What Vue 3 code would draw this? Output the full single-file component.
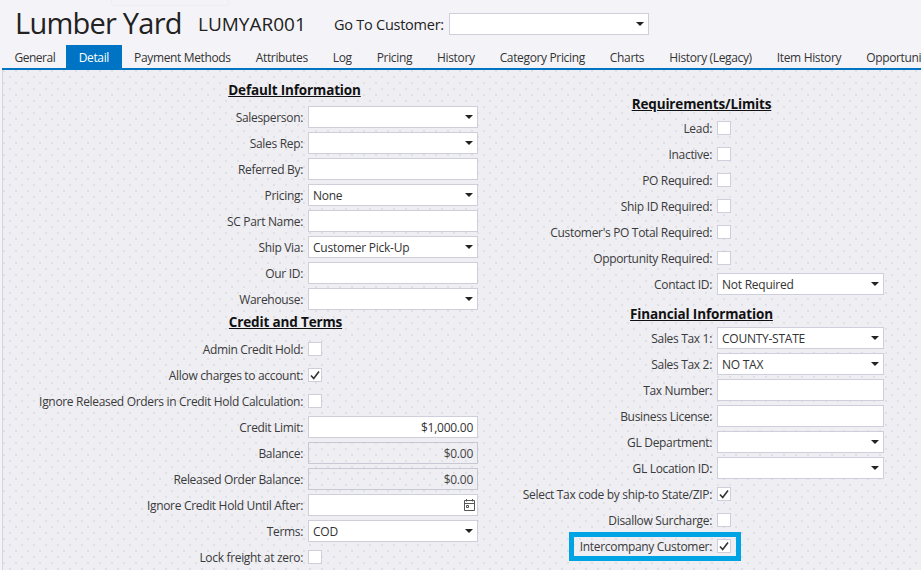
<template>
  <div class="page">
    <div class="ghost"></div>
    <header class="top">
      <h1 class="name">Lumber Yard</h1>
      <span class="code">LUMYAR001</span>
      <label class="goto">Go To Customer:</label>
      <div class="field select goto-select"><span class="caret"></span></div>
    </header>

    <nav class="tabs">
      <span v-for="t in tabs" :key="t" class="tab" :class="{ active: t === 'Detail' }">{{ t }}</span>
    </nav>

    <main class="panel">
      <section v-for="col in columns" :key="col.side" class="col" :class="col.side">
        <template v-for="group in col.groups" :key="group.title">
          <h2 class="heading">{{ group.title }}</h2>
          <div v-for="r in group.rows" :key="r.label" class="row" :class="{ marked: r.mark }">
            <span class="label">{{ r.label }}</span>

            <span v-if="r.type === 'check'" class="check">
              <svg v-if="r.checked" viewBox="0 0 14 14" width="14" height="14">
                <path d="M3 7.5l2.7 3L11 3.4" fill="none" stroke="#333" stroke-width="1.6"></path>
              </svg>
            </span>
            <div v-else-if="r.type === 'select'" class="field select">
              <span>{{ r.value }}</span>
              <span class="caret"></span>
            </div>
            <div v-else-if="r.type === 'money'" class="field money" :class="{ disabled: r.disabled }">{{ r.value }}</div>
            <div v-else-if="r.type === 'date'" class="field date">
              <svg viewBox="0 0 13 14" width="13" height="14">
                <path d="M1.5 2.5h10v10h-10zM1.5 5.5h10M3.5 1v2.5M9.5 1v2.5M3.5 7.5h2v2h-2z" fill="none" stroke="#555" stroke-width="1"></path>
              </svg>
            </div>
            <div v-else class="field">{{ r.value }}</div>
          </div>
        </template>
      </section>
    </main>
  </div>
</template>

<script setup>
const tabs = ['General', 'Detail', 'Payment Methods', 'Attributes', 'Log', 'Pricing', 'History', 'Category Pricing', 'Charts', 'History (Legacy)', 'Item History', 'Opportunities']

const sel = (label, value = '') => ({ label, type: 'select', value })
const txt = (label, value = '') => ({ label, type: 'text', value })
const chk = (label, checked = false, mark = false) => ({ label, type: 'check', checked, mark })

const columns = [
  {
    side: 'left',
    groups: [
      {
        title: 'Default Information',
        rows: [sel('Salesperson:'), sel('Sales Rep:'), txt('Referred By:'), sel('Pricing:', 'None'), txt('SC Part Name:'), sel('Ship Via:', 'Customer Pick-Up'), txt('Our ID:'), sel('Warehouse:')]
      },
      {
        title: 'Credit and Terms',
        rows: [
          chk('Admin Credit Hold:'),
          chk('Allow charges to account:', true),
          chk('Ignore Released Orders in Credit Hold Calculation:'),
          { label: 'Credit Limit:', type: 'money', value: '$1,000.00' },
          { label: 'Balance:', type: 'money', value: '$0.00', disabled: true },
          { label: 'Released Order Balance:', type: 'money', value: '$0.00', disabled: true },
          { label: 'Ignore Credit Hold Until After:', type: 'date' },
          sel('Terms:', 'COD'),
          chk('Lock freight at zero:')
        ]
      }
    ]
  },
  {
    side: 'right',
    groups: [
      {
        title: 'Requirements/Limits',
        rows: [chk('Lead:'), chk('Inactive:'), chk('PO Required:'), chk('Ship ID Required:'), chk("Customer's PO Total Required:"), chk('Opportunity Required:'), sel('Contact ID:', 'Not Required')]
      },
      {
        title: 'Financial Information',
        rows: [
          sel('Sales Tax 1:', 'COUNTY-STATE'),
          sel('Sales Tax 2:', 'NO TAX'),
          txt('Tax Number:'),
          txt('Business License:'),
          sel('GL Department:'),
          sel('GL Location ID:'),
          chk('Select Tax code by ship-to State/ZIP:', true),
          chk('Disallow Surcharge:'),
          chk('Intercompany Customer:', true, true)
        ]
      }
    ]
  }
]
</script>

<style>
html, body { margin: 0; padding: 0; background: #f4f4f8; overflow: hidden; }
</style>

<style scoped>
.page {
  position: relative;
  width: 921px;
  height: 570px;
  overflow: hidden;
  font-family: "Open Sans", "Noto Sans", sans-serif;
  font-size: 12px;
  color: #333;
}

/* faint leftover box at the very top */
.ghost {
  position: absolute;
  left: 111px;
  top: -4px;
  width: 118px;
  height: 10px;
  border: 1px solid #eeeef1;
  border-radius: 3px;
  box-sizing: border-box;
}

.top {
  display: flex;
  align-items: center;
  height: 45px;
  padding-left: 15px;
  box-sizing: border-box;
}
.name {
  width: 183px;
  flex: none;
  margin: 0;
  font-size: 29px;
  font-weight: 400;
  letter-spacing: -0.76px;
  color: #222;
  line-height: 45px;
}
.code { width: 136px; flex: none; padding-top: 3px; font-size: 19px; line-height: 24px; color: #222; }
.goto { width: 115px; flex: none; padding-top: 3px; font-size: 14.5px; letter-spacing: -0.25px; color: #222; }
.goto-select { width: 200px; height: 30px; margin-top: 3px; }

.tabs {
  display: flex;
  height: 23px;
  margin-left: 2px;
  border-bottom: 2px solid #0074c4;
  white-space: nowrap;
  overflow: hidden;
}
.tab {
  padding: 0 12.5px;
  line-height: 25px;
  letter-spacing: -0.35px;
}
.tab:first-child { padding-right: 11px; letter-spacing: -0.5px; }
.tab.active { background: #0074c4; color: #fff; }

.panel {
  display: flex;
  height: 500px;
  margin-left: 2px;
  border-left: 1px solid #d4d4de;
  background-color: #eeeef3;
  background-image:
    radial-gradient(circle at 1px 1px, #dfdfe6 0.7px, transparent 1px),
    radial-gradient(circle at 7px 7px, #dfdfe6 0.7px, transparent 1px);
  background-size: 12px 12px;
}
.col { display: flex; flex-direction: column; flex: none; }
.left { width: 475px; padding-top: 10px; }
.right { width: 381px; margin-left: 25px; padding-top: 24px; }

.heading {
  margin: 0 0 4px;
  height: 20px;
  line-height: 20px;
  font-size: 13.5px;
  font-weight: 700;
  letter-spacing: -0.15px;
  color: #111;
  text-decoration: underline;
  text-align: center;
}
.left .heading { padding-left: 108px; }
.left .row + .heading { padding-left: 90px; }
.right .heading { padding-left: 16px; margin-bottom: 1px; }
.right .row + .heading { margin-top: 7px; }

.row {
  position: relative;
  display: flex;
  justify-content: flex-end;
  align-items: center;
  gap: 5px;
  height: 26px;
  flex: none;
}
.left .field { width: 170px; }
.right .field { width: 167px; }
.left .check { margin-right: 156px; }
.right .check { margin-right: 153px; }

.label { white-space: nowrap; letter-spacing: -0.32px; color: #3a3a3a; }

.field {
  display: flex;
  align-items: center;
  box-sizing: border-box;
  height: 22px;
  padding: 0 5px 0 4px;
  background: #fff;
  border: 1px solid #cfcfdb;
  letter-spacing: -0.25px;
}
.select { justify-content: space-between; }
.caret {
  width: 0;
  height: 0;
  margin-left: auto;
  margin-right: -1px;
  border-left: 4.5px solid transparent;
  border-right: 4.5px solid transparent;
  border-top: 4.5px solid #222;
}
.money { justify-content: flex-end; padding-right: 4px; }
.disabled { background: transparent; border-color: #c8c8d4; color: #444; }
.date { justify-content: flex-end; padding-right: 1px; }
.date svg { display: block; }

.check {
  box-sizing: border-box;
  display: block;
  width: 14px;
  height: 14px;
  background: #fff;
  border: 1px solid #cfcfdb;
}
.check svg { display: block; margin: -1px; }

/* highlight box drawn over the row */
.marked::after {
  content: "";
  position: absolute;
  left: 66px;
  top: -1px;
  width: 172px;
  height: 29px;
  box-sizing: border-box;
  border: 5px solid #00a4e4;
}
</style>
